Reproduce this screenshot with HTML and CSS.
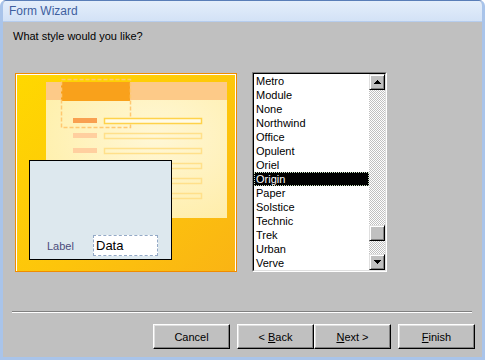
FILE: index.html
```html
<!DOCTYPE html>
<html lang="en">
<head>
    <meta charset="UTF-8">
    <title>Form Wizard</title>
    <link rel="stylesheet" href="styles.css">
</head>
<body>
    <div class="window">
        <div class="titlebar">Form Wizard</div>
        <div class="content">
            <p class="question">What style would you like?</p>
            <div class="main">
                <div class="preview">
                    <svg class="preview-art" width="218" height="196" viewBox="0 0 218 196">
                        <defs>
                            <linearGradient id="bg" x1="0" y1="0" x2="1" y2="1">
                                <stop offset="0" stop-color="#ffd800"/>
                                <stop offset="0.6" stop-color="#fdc40c"/>
                                <stop offset="1" stop-color="#fab414"/>
                            </linearGradient>
                            <radialGradient id="sheet" cx="0.6" cy="0.4" r="0.7">
                                <stop offset="0" stop-color="#fffbe8"/>
                                <stop offset="1" stop-color="#fff2b8"/>
                            </radialGradient>
                        </defs>
                        <rect x="0" y="0" width="218" height="196" fill="url(#bg)"/>
                        <rect x="29" y="7" width="181" height="136" fill="url(#sheet)" opacity="0.92"/>
                        <rect x="29" y="7" width="181" height="18" fill="#fdca88"/>
                        <rect x="44" y="7" width="69" height="19" fill="#f9a11b"/>
                        <rect x="44.5" y="4.5" width="69" height="48" fill="none" stroke="#ffc870" stroke-width="1.5" stroke-dasharray="4 2"/>

                        <rect x="56" y="43" width="24" height="5" fill="#f9a050"/>
                        <rect x="87.5" y="43.5" width="97" height="5" fill="#fffbe8" stroke="#ffd24a" stroke-width="1.5"/>
                        <rect x="56" y="58" width="24" height="5" fill="#ffcf9f"/>
                        <rect x="87.5" y="58.5" width="97" height="5" fill="none" stroke="#ffe08a" stroke-width="1.5"/>
                        <rect x="56" y="73" width="24" height="5" fill="#ffcf9f"/>
                        <rect x="87.5" y="73.5" width="97" height="5" fill="none" stroke="#ffe08a" stroke-width="1.5"/>
                        <rect x="56" y="88" width="24" height="5" fill="#ffcf9f"/>
                        <rect x="87.5" y="88.5" width="97" height="5" fill="none" stroke="#ffe08a" stroke-width="1.5"/>
                        <rect x="56" y="103" width="24" height="5" fill="#ffcf9f"/>
                        <rect x="87.5" y="103.5" width="97" height="5" fill="none" stroke="#ffe08a" stroke-width="1.5"/>
                        <rect x="56" y="118" width="24" height="5" fill="#ffcf9f"/>
                        <rect x="87.5" y="118.5" width="97" height="5" fill="none" stroke="#ffe08a" stroke-width="1.5"/>
                    </svg>
                    <div class="card">
                        <span class="card-label">Label</span>
                        <span class="card-data">Data</span>
                    </div>
                </div>
                <div class="listbox">
                    <div class="listbox-inner">
                        <ul class="items">
                            <li>Metro</li>
                            <li>Module</li>
                            <li>None</li>
                            <li>Northwind</li>
                            <li>Office</li>
                            <li>Opulent</li>
                            <li>Oriel</li>
                            <li class="selected">Origin</li>
                            <li>Paper</li>
                            <li>Solstice</li>
                            <li>Technic</li>
                            <li>Trek</li>
                            <li>Urban</li>
                            <li>Verve</li>
                        </ul>
                        <div class="scrollbar">
                            <div class="sb-btn">
                                <svg width="7" height="4" viewBox="0 0 7 4" shape-rendering="crispEdges">
                                    <rect x="3" y="0" width="1" height="1"/>
                                    <rect x="2" y="1" width="3" height="1"/>
                                    <rect x="1" y="2" width="5" height="1"/>
                                    <rect x="0" y="3" width="7" height="1"/>
                                </svg>
                            </div>
                            <div class="sb-track">
                                <div class="sb-thumb"></div>
                            </div>
                            <div class="sb-btn">
                                <svg width="7" height="4" viewBox="0 0 7 4" shape-rendering="crispEdges">
                                    <rect x="0" y="0" width="7" height="1"/>
                                    <rect x="1" y="1" width="5" height="1"/>
                                    <rect x="2" y="2" width="3" height="1"/>
                                    <rect x="3" y="3" width="1" height="1"/>
                                </svg>
                            </div>
                        </div>
                    </div>
                </div>
            </div>
            <div class="separator"></div>
            <div class="buttons">
                <button class="btn btn-cancel">Cancel</button>
                <button class="btn">&lt; <u>B</u>ack</button>
                <button class="btn"><u>N</u>ext &gt;</button>
                <button class="btn btn-finish"><u>F</u>inish</button>
            </div>
        </div>
    </div>
</body>
</html>
```

FILE: styles.css
```css
body {
    margin: 0;
    background-color: #ffffff;
    font-family: "Liberation Sans", Arial, sans-serif;
}
.window {
    width: 485px;
    height: 360px;
    box-sizing: border-box;
    display: flex;
    flex-direction: column;
    background-color: #c0c0c0;
    border: 3px solid #a9c4ea;
    border-top: 1px solid #5a7eb8;
    border-radius: 6px 6px 0 0;
    overflow: hidden;
}
.titlebar {
    height: 20px;
    line-height: 20px;
    padding-left: 6px;
    font-size: 12px;
    color: #3f5f9f;
    background: linear-gradient(#e4eefb, #d3e2f6);
    border-bottom: 1px solid #b6cdee;
}
.content {
    flex: 1;
    padding-top: 8px;
}
.question {
    margin: 0 0 0 10px;
    font-size: 11px;
    line-height: 13px;
    color: #000000;
}
.main {
    display: flex;
    margin-top: 29px;
    padding-left: 12px;
}
.preview {
    position: relative;
    margin-top: 1px;
    width: 222px;
    height: 199px;
    box-sizing: border-box;
    border: 1px solid #f08c00;
    padding: 1px;
    background-color: #ffffff;
    overflow: hidden;
}
.preview-art {
    display: block;
}
.card {
    position: absolute;
    left: 13px;
    top: 86px;
    width: 143px;
    height: 100px;
    box-sizing: border-box;
    border: 1px solid #000000;
    background-color: #dde8ee;
    display: flex;
    align-items: flex-end;
    padding: 0 0 3px 17px;
}
.card-label {
    width: 46px;
    font-size: 11px;
    line-height: 19px;
    color: #4b4b7a;
}
.card-data {
    width: 65px;
    height: 21px;
    box-sizing: border-box;
    border: 1px dashed #93a9c6;
    background-color: #ffffff;
    padding-left: 2px;
    font-size: 13px;
    line-height: 19px;
    color: #000000;
}
.listbox {
    margin-left: 15px;
    width: 135px;
    height: 200px;
    box-sizing: border-box;
    border: 1px solid;
    border-color: #808080 #ffffff #ffffff #808080;
}
.listbox-inner {
    height: 100%;
    box-sizing: border-box;
    border: 1px solid;
    border-color: #000000 #dfdfdf #dfdfdf #000000;
    background-color: #ffffff;
    display: flex;
}
.items {
    flex: 1;
    margin: 0;
    padding: 0;
    list-style: none;
}
.items li {
    height: 14px;
    line-height: 14px;
    padding-left: 2px;
    font-size: 11px;
    color: #000000;
}
.items li.selected {
    background-color: #000000;
    color: #ffffff;
    outline: 1px dotted #c8e0c0;
    outline-offset: -1px;
}
.scrollbar {
    width: 16px;
    display: flex;
    flex-direction: column;
}
.sb-btn {
    height: 16px;
    box-sizing: border-box;
    background-color: #c0c0c0;
    border: 1px solid;
    border-color: #dfdfdf #000000 #000000 #dfdfdf;
    box-shadow: inset 1px 1px #ffffff, inset -1px -1px #808080;
    display: flex;
    align-items: center;
    justify-content: center;
}
.sb-btn svg {
    fill: #000000;
}
.sb-track {
    flex: 1;
    background: repeating-conic-gradient(#c0c0c0 0 25%, #ffffff 0 50%) 0 0 / 2px 2px;
}
.sb-thumb {
    margin-top: 135px;
    height: 16px;
    box-sizing: border-box;
    background-color: #c0c0c0;
    border: 1px solid;
    border-color: #dfdfdf #000000 #000000 #dfdfdf;
    box-shadow: inset 1px 1px #ffffff, inset -1px -1px #808080;
}
.separator {
    margin: 39px 10px 0 9px;
    border-top: 1px solid #808080;
    border-bottom: 1px solid #ffffff;
}
.buttons {
    display: flex;
    justify-content: flex-end;
    margin-top: 11px;
    padding-right: 7px;
}
.btn {
    width: 77px;
    height: 25px;
    padding: 0;
    box-sizing: border-box;
    font-family: "Liberation Sans", Arial, sans-serif;
    font-size: 11px;
    color: #000000;
    background-color: #c0c0c0;
    border: 1px solid;
    border-color: #ffffff #000000 #000000 #ffffff;
    box-shadow: inset -1px -1px #808080, inset 1px 1px #dfdfdf;
}
.btn-cancel {
    margin-right: 7px;
}
.btn-finish {
    margin-left: 7px;
}
```
